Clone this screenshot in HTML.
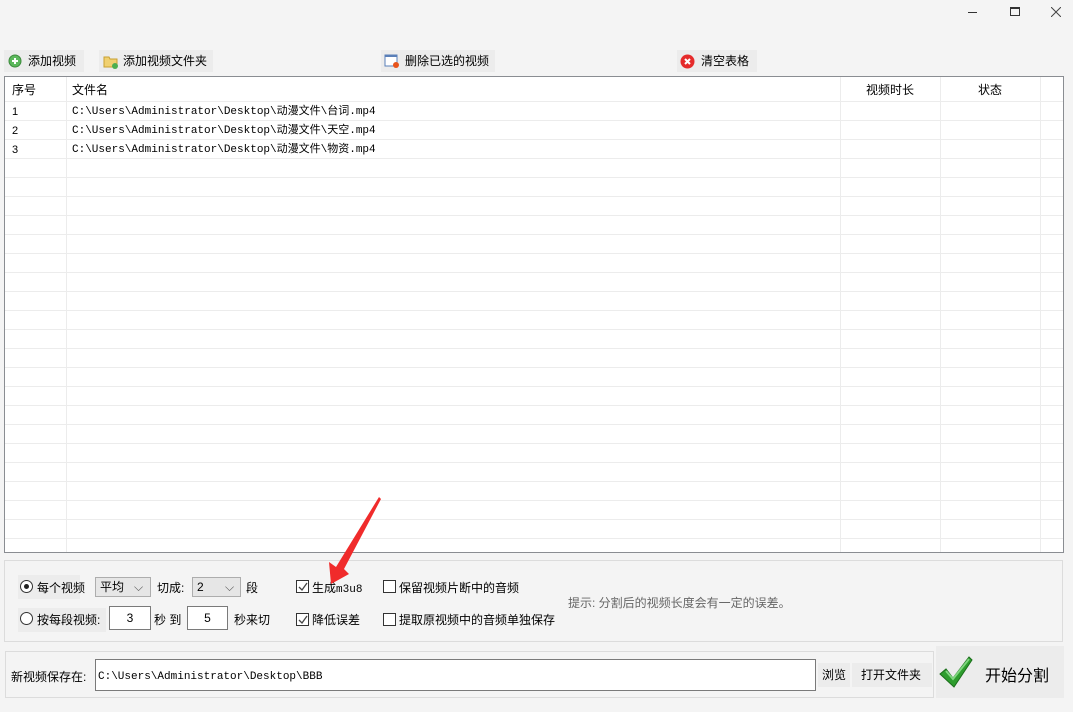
<!DOCTYPE html>
<html><head><meta charset="utf-8"><style>
*{margin:0;padding:0;box-sizing:border-box}
body{width:1073px;height:712px;background:#f4f4f4;font-family:"Liberation Sans","Noto Sans CJK SC",sans-serif;font-size:12px;color:#000;position:relative;overflow:hidden}
.a{position:absolute;white-space:nowrap}
.btn{position:absolute;background:#ececec;height:22px;line-height:22px}
.mono{font-family:"Liberation Mono","Noto Sans CJK SC",monospace;font-size:11px}
.tbl{position:absolute;left:4px;top:76px;width:1060px;height:477px;background:#fff;border:1px solid #8a8d92;overflow:hidden}
.hl{position:absolute;left:0;right:0;height:1px;background:#ececec}
.vl{position:absolute;top:0;bottom:0;width:1px;background:#ececec}
.r{position:absolute;height:19px;line-height:19px;white-space:nowrap}
.box{position:absolute;border:1px solid #dcdcdc}
.inp{position:absolute;background:#fff;border:1px solid #7a7a7a;height:24px}
.sel{position:absolute;background:#e6e6e6;border:1px solid #adadad;height:20px;line-height:18px;padding-left:4px}
.cb{position:absolute;width:13px;height:13px;border:1px solid #333;background:#fff}
.rd{position:absolute;width:13px;height:13px;border:1px solid #333;border-radius:50%;background:#fff}
</style></head><body>
<div class="a" style="left:968px;top:12px;width:9px;height:1px;background:#333"></div>
<div class="a" style="left:1010px;top:7px;width:10px;height:9px;border:1px solid #333;border-top-width:2px"></div>
<svg class="a" style="left:1051px;top:7px" width="10" height="10"><path d="M0 0L10 10M10 0L0 10" stroke="#444" stroke-width="1"/></svg>

<div class="btn" style="left:4px;top:50px;width:80px">
 <svg class="a" style="left:4px;top:4px" width="14" height="14"><circle cx="7" cy="7" r="6" fill="#5cb85c" stroke="#3d8b3d"/><path d="M7 4v6M4 7h6" stroke="#fff" stroke-width="2"/></svg>
 <span class="a" style="left:24px">添加视频</span></div>
<div class="btn" style="left:99px;top:50px;width:114px">
 <svg class="a" style="left:4px;top:4px" width="16" height="15"><path d="M1 3h5l1 2h7v8H1z" fill="#f0d070" stroke="#c9a030"/><circle cx="12" cy="12" r="3" fill="#4caf50"/></svg>
 <span class="a" style="left:24px">添加视频文件夹</span></div>
<div class="btn" style="left:381px;top:50px;width:114px">
 <svg class="a" style="left:3px;top:4px" width="16" height="15"><rect x="1" y="1" width="12" height="11" fill="#fff" stroke="#5a7fb8"/><rect x="1" y="1" width="12" height="2" fill="#5a7fb8"/><circle cx="12" cy="11" r="3" fill="#e8541c"/></svg>
 <span class="a" style="left:24px">删除已选的视频</span></div>
<div class="btn" style="left:677px;top:50px;width:80px">
 <svg class="a" style="left:3px;top:4px" width="15" height="15"><circle cx="7.5" cy="7.5" r="7" fill="#e52b2b"/><path d="M5 5l5 5M10 5l-5 5" stroke="#fff" stroke-width="2"/></svg>
 <span class="a" style="left:24px">清空表格</span></div>

<div class="tbl">
 <div class="hl" style="top:24px"></div><div class="hl" style="top:43px"></div><div class="hl" style="top:62px"></div><div class="hl" style="top:81px"></div><div class="hl" style="top:100px"></div><div class="hl" style="top:119px"></div><div class="hl" style="top:138px"></div><div class="hl" style="top:157px"></div><div class="hl" style="top:176px"></div><div class="hl" style="top:195px"></div><div class="hl" style="top:214px"></div><div class="hl" style="top:233px"></div><div class="hl" style="top:252px"></div><div class="hl" style="top:271px"></div><div class="hl" style="top:290px"></div><div class="hl" style="top:309px"></div><div class="hl" style="top:328px"></div><div class="hl" style="top:347px"></div><div class="hl" style="top:366px"></div><div class="hl" style="top:385px"></div><div class="hl" style="top:404px"></div><div class="hl" style="top:423px"></div><div class="hl" style="top:442px"></div><div class="hl" style="top:461px"></div>
 <div class="vl" style="left:61px"></div><div class="vl" style="left:835px"></div><div class="vl" style="left:935px"></div><div class="vl" style="left:1035px"></div>
 <span class="r" style="left:7px;top:4px">序号</span><span class="r" style="left:67px;top:4px">文件名</span>
 <span class="r" style="left:861px;top:4px">视频时长</span><span class="r" style="left:973px;top:4px">状态</span>
 <span class="r" style="left:7px;top:26px;font-size:11px">1</span><span class="r mono" style="left:67px;top:26px">C:\Users\Administrator\Desktop\动漫文件\台词.mp4</span>
 <span class="r" style="left:7px;top:45px;font-size:11px">2</span><span class="r mono" style="left:67px;top:45px">C:\Users\Administrator\Desktop\动漫文件\天空.mp4</span>
 <span class="r" style="left:7px;top:64px;font-size:11px">3</span><span class="r mono" style="left:67px;top:64px">C:\Users\Administrator\Desktop\动漫文件\物资.mp4</span>
</div>

<div class="box" style="left:4px;top:560px;width:1059px;height:82px"></div>
<div class="a" style="left:18px;top:575px;width:62px;height:24px;background:#ececec"></div>
<div class="a" style="left:18px;top:608px;width:88px;height:24px;background:#ececec"></div>
<div class="rd" style="left:20px;top:580px"></div><div class="a" style="left:24px;top:584px;width:5px;height:5px;border-radius:50%;background:#222"></div>
<span class="a" style="left:37px;top:579px">每个视频</span>
<div class="sel" style="left:95px;top:577px;width:56px">平均<span class="a" style="left:38px;top:0;color:#555">⌵</span></div>
<span class="a" style="left:157px;top:579px">切成:</span>
<div class="sel" style="left:192px;top:577px;width:49px">2<span class="a" style="left:32px;top:0;color:#555">⌵</span></div>
<span class="a" style="left:246px;top:579px">段</span>
<div class="rd" style="left:20px;top:612px"></div>
<span class="a" style="left:37px;top:611px">按每段视频:</span>
<div class="inp" style="left:109px;top:606px;width:42px;text-align:center;line-height:22px">3</div>
<span class="a" style="left:154px;top:611px">秒 到</span>
<div class="inp" style="left:187px;top:606px;width:41px;text-align:center;line-height:22px">5</div>
<span class="a" style="left:234px;top:611px">秒来切</span>
<div class="cb" style="left:296px;top:580px"></div><svg class="a" style="left:297px;top:581px" width="12" height="12"><path d="M2 6l3 3 5-7" stroke="#444" fill="none" stroke-width="1.3"/></svg>
<span class="a" style="left:312px;top:579px">生成<span class="mono">m3u8</span></span>
<div class="cb" style="left:296px;top:613px"></div><svg class="a" style="left:297px;top:614px" width="12" height="12"><path d="M2 6l3 3 5-7" stroke="#444" fill="none" stroke-width="1.3"/></svg>
<span class="a" style="left:312px;top:611px">降低误差</span>
<div class="cb" style="left:383px;top:580px"></div><span class="a" style="left:399px;top:579px">保留视频片断中的音频</span>
<div class="cb" style="left:383px;top:613px"></div><span class="a" style="left:399px;top:611px">提取原视频中的音频单独保存</span>
<span class="a" style="left:568px;top:594px;color:#666">提示: 分割后的视频长度会有一定的误差。</span>

<div class="box" style="left:5px;top:651px;width:929px;height:47px"></div>
<span class="a" style="left:11px;top:668px">新视频保存在:</span>
<div class="inp" style="left:95px;top:659px;width:721px;height:32px;line-height:30px;padding-left:2px"><span class="mono">C:\Users\Administrator\Desktop\BBB</span></div>
<div class="btn" style="left:818px;top:663px;width:32px;height:24px;line-height:24px;padding-left:4px">浏览</div>
<div class="btn" style="left:852px;top:663px;width:80px;height:24px;line-height:24px;padding-left:9px">打开文件夹</div>
<div class="a" style="left:936px;top:646px;width:128px;height:52px;background:#ececec"></div>
<svg class="a" style="left:938px;top:654px" width="36" height="36"><path d="M2 20l6-5 7 9L31 3l3 3-18 27z" fill="#2e9d2e" stroke="#1b6e1b"/><path d="M8 17l7 8L31 5" stroke="#7fd67f" stroke-width="2" fill="none"/></svg>
<span class="a" style="left:985px;top:662px;font-size:16px">开始分割</span>

<svg class="a" style="left:0;top:0" width="1073" height="712"><polygon points="381,499 344,569 349,574 331,584 329,562 336,567 379,497" fill="#f02b2b"/></svg>
</body></html>
